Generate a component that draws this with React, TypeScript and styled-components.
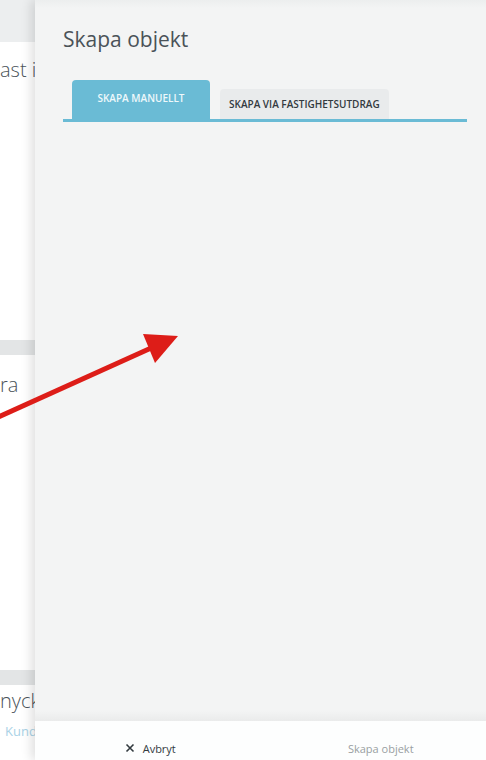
import React from 'react';
import styled, { createGlobalStyle } from 'styled-components';

const Global = createGlobalStyle`
  html, body { margin: 0; padding: 0; height: 100%; }
  body { font-family: "Open Sans", "Liberation Sans", sans-serif; background: #ffffff; }
  #root { height: 100%; }
`;

const App = () => {
  return (
    <Page>
      <Global />
      <Behind>
        <TopBar />
        <Card $h={298}>
          <CardTitle>ast i</CardTitle>
        </Card>
        <Gap />
        <Card $h={315}>
          <CardTitle $top={16}>ra</CardTitle>
        </Card>
        <Gap />
        <Card $h={80}>
          <CardTitle $top={2}>nyck</CardTitle>
          <CardLink>Kund</CardLink>
        </Card>
      </Behind>

      <Panel>
        <Head>
          <Title>Skapa objekt</Title>
          <Tabs>
            <Tab $active>Skapa manuellt</Tab>
            <Tab>Skapa via fastighetsutdrag</Tab>
          </Tabs>
        </Head>
        <Body />
        <Footer>
          <FootButton $shift={10}>
            <Cross viewBox="0 0 10 10">
              <path d="M1.5 1.5 L8.5 8.5 M8.5 1.5 L1.5 8.5" />
            </Cross>
            Avbryt
          </FootButton>
          <FootButton $shift={20} $muted>Skapa objekt</FootButton>
        </Footer>
      </Panel>

      <Arrow viewBox="0 0 486 760">
        <line x1="-4" y1="418" x2="160" y2="344" />
        <polygon points="178,336 143,334 155,363" />
      </Arrow>
    </Page>
  );
};

export default App;

const Page = styled.div`
  position: relative;
  display: flex;
  width: 100%;
  height: 100vh;
  overflow: hidden;
`;

const Behind = styled.div`
  width: 35px;
  flex: none;
  display: flex;
  flex-direction: column;
  background: #e3e5e6;
  overflow: hidden;
`;

const TopBar = styled.div`
  height: 42px;
  flex: none;
  background: #eceeef;
`;

const Card = styled.div<{ $h: number }>`
  height: ${(p) => p.$h}px;
  flex: none;
  background: #ffffff;
  display: flex;
  flex-direction: column;
`;

const CardTitle = styled.div<{ $top?: number }>`
  margin-top: ${(p) => p.$top ?? 14}px;
  white-space: nowrap;
  font-size: 20px;
  font-weight: 300;
  color: #4b5359;
`;

const CardLink = styled.div`
  margin-top: 8px;
  padding-left: 5px;
  white-space: nowrap;
  font-size: 13px;
  color: #a9d2e6;
`;

const Gap = styled.div`
  height: 15px;
  flex: none;
`;

const Panel = styled.div`
  flex: 1;
  display: flex;
  flex-direction: column;
  background: #f3f4f4;
  box-shadow: -4px 0 10px rgba(0, 0, 0, 0.12);
  z-index: 1;
`;

const Head = styled.div`
  padding: 26px 19px 0 28px;
  background: linear-gradient(#eceeee, #f3f4f4 8px);
`;

const Title = styled.h1`
  margin: 0;
  font-size: 21px;
  font-weight: 400;
  color: #4a5258;
  line-height: 27px;
`;

const Tabs = styled.div`
  margin-top: 27px;
  display: flex;
  align-items: flex-end;
  gap: 10px;
  padding-left: 9px;
  border-bottom: 3px solid #6abbd5;
`;

const Tab = styled.div<{ $active?: boolean }>`
  height: ${(p) => (p.$active ? 39 : 30)}px;
  padding: ${(p) => (p.$active ? '11px 0 0' : '0 9px')};
  width: ${(p) => (p.$active ? '138px' : 'auto')};
  box-sizing: border-box;
  display: flex;
  align-items: ${(p) => (p.$active ? 'flex-start' : 'center')};
  justify-content: center;
  border-radius: 4px 4px 0 0;
  background: ${(p) => (p.$active ? '#6abbd5' : '#e9ebec')};
  color: ${(p) => (p.$active ? '#eef8fb' : '#333a3f')};
  font-size: 10px;
  font-weight: 600;
  text-transform: uppercase;
  white-space: nowrap;
`;

const Body = styled.div`
  flex: 1;
  background: linear-gradient(#f3f4f4 calc(100% - 10px), #eaebeb);
`;

const Footer = styled.div`
  height: 39px;
  flex: none;
  display: flex;
  background: #fdfefe;
`;

const FootButton = styled.div<{ $muted?: boolean; $shift: number }>`
  flex: 1;
  display: flex;
  align-items: center;
  justify-content: center;
  padding-top: 15px;
  padding-left: ${(p) => p.$shift}px;
  gap: 8px;
  font-size: 11px;
  color: ${(p) => (p.$muted ? '#9a9fa2' : '#333a3f')};
`;

const Cross = styled.svg`
  width: 10px;
  height: 10px;
  stroke: #333a3f;
  stroke-width: 1.6;
  fill: none;
`;

const Arrow = styled.svg`
  position: absolute;
  inset: 0;
  width: 100%;
  height: 100%;
  pointer-events: none;
  z-index: 2;
  line { stroke: #dd1d18; stroke-width: 5; }
  polygon { fill: #dd1d18; }
`;
